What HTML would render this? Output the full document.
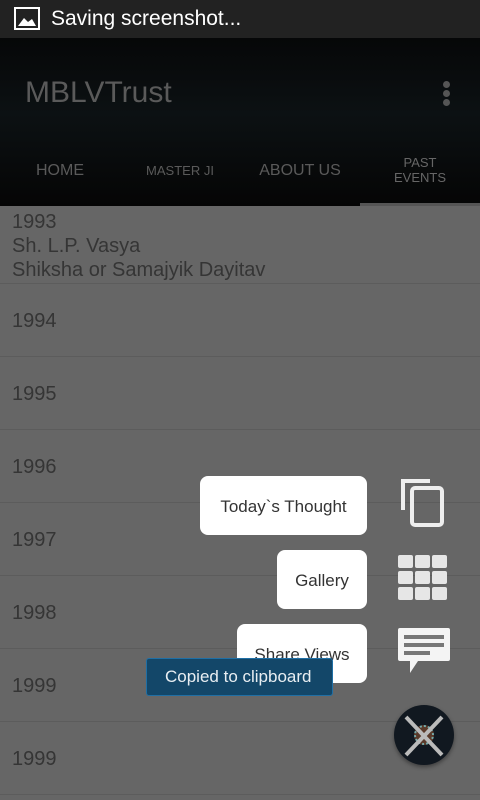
<!DOCTYPE html>
<html><head><meta charset="utf-8"><style>
*{margin:0;padding:0;box-sizing:border-box}
body{width:480px;height:800px;overflow:hidden;background:#666;font-family:"Liberation Sans",sans-serif;position:relative}
.sb{position:absolute;top:0;left:0;width:480px;height:38px;background:#222;color:#fff;font-size:21px}
.ab{position:absolute;top:38px;left:0;width:480px;height:168px;background:linear-gradient(#060708,#0c1113 45%,#050505)}
.t{position:absolute;color:#5a5a5a}
.row{position:absolute;left:0;width:480px;border-bottom:1px solid #5c5c5c;color:#353535;font-size:20px;padding-left:12px}
.pill{position:absolute;background:#fff;border-radius:8px;color:#333;font-size:17px;text-align:center;height:59px;line-height:61px}
</style></head><body>
<div class="sb">
<svg style="position:absolute;left:14px;top:7px" width="26" height="23" viewBox="0 0 26 23"><rect x="1" y="1" width="24" height="21" fill="none" stroke="#fff" stroke-width="2"/><path d="M4 19 L10 11 L14 15 L18 12 L22 19Z" fill="#fff"/></svg>
<span style="position:absolute;left:51px;top:7px">Saving screenshot...</span></div>
<div class="ab">
<div class="t" style="left:25px;top:38px;font-size:30px">MBLVTrust</div>
<div style="position:absolute;left:443px;top:43px;width:7px">
<div style="width:7px;height:7px;border-radius:50%;background:#555;margin-bottom:2px"></div><div style="width:7px;height:7px;border-radius:50%;background:#555;margin-bottom:2px"></div><div style="width:7px;height:7px;border-radius:50%;background:#555"></div></div>
<div class="t" style="left:0;width:120px;text-align:center;top:124px;font-size:16px">HOME</div>
<div class="t" style="left:120px;width:120px;text-align:center;top:125px;font-size:13px">MASTER JI</div>
<div class="t" style="left:240px;width:120px;text-align:center;top:124px;font-size:16px">ABOUT US</div>
<div class="t" style="left:360px;width:120px;text-align:center;top:117px;font-size:13px;line-height:15px;color:#666">PAST<br>EVENTS</div>
<div style="position:absolute;left:360px;top:165px;width:120px;height:3px;background:#555"></div>
</div>
<div class="row" style="top:206px;height:78px;line-height:24px;padding-top:4px">1993<br>Sh. L.P. Vasya<br>Shiksha or Samajyik Dayitav</div>
<div class="row" style="top:284px;height:73px;line-height:75px">1994</div>
<div class="row" style="top:357px;height:73px;line-height:75px">1995</div>
<div class="row" style="top:430px;height:73px;line-height:75px">1996</div>
<div class="row" style="top:503px;height:73px;line-height:75px">1997</div>
<div class="row" style="top:576px;height:73px;line-height:75px">1998</div>
<div class="row" style="top:649px;height:73px;line-height:75px">1999</div>
<div class="row" style="top:722px;height:73px;line-height:75px">1999</div>
<div class="pill" style="left:200px;top:476px;width:167px">Today`s Thought</div>
<div class="pill" style="left:277px;top:550px;width:90px">Gallery</div>
<div class="pill" style="left:237px;top:624px;width:130px">Share Views</div>
<div style="position:absolute;left:146px;top:658px;width:187px;height:38px;background:#134769;border:1px solid #1f6fa5;border-radius:3px;color:#e8eef2;font-size:17px;line-height:36px;padding-left:18px">Copied to clipboard</div>
<svg style="position:absolute;left:400px;top:477px" width="46" height="52" viewBox="0 0 46 52"><path d="M3 33 V4 H30" fill="none" stroke="#eee" stroke-width="4"/><rect x="12" y="11" width="30" height="37" rx="3" fill="none" stroke="#eee" stroke-width="4"/></svg>
<svg style="position:absolute;left:398px;top:555px" width="52" height="46"><g fill="#e6e6e6"><rect x="0" y="0" width="15" height="13" rx="2"/><rect x="17" y="0" width="15" height="13" rx="2"/><rect x="34" y="0" width="15" height="13" rx="2"/><rect x="0" y="16" width="15" height="13" rx="2"/><rect x="17" y="16" width="15" height="13" rx="2"/><rect x="34" y="16" width="15" height="13" rx="2"/><rect x="0" y="32" width="15" height="13" rx="2"/><rect x="17" y="32" width="15" height="13" rx="2"/><rect x="34" y="32" width="15" height="13" rx="2"/></g></svg>
<svg style="position:absolute;left:398px;top:628px" width="53" height="47"><path d="M2 0 H50 Q52 0 52 2 V31 Q52 33 50 33 H20 L12 45 V33 H2 Q0 33 0 31 V2 Q0 0 2 0Z" fill="#f4f4f4"/><rect x="6" y="7" width="40" height="4" fill="#777"/><rect x="6" y="15" width="40" height="4" fill="#777"/><rect x="6" y="23" width="26" height="4" fill="#777"/></svg>
<div style="position:absolute;left:394px;top:705px;width:60px;height:60px;border-radius:50%;background:#111820;box-shadow:0 2px 4px rgba(0,0,0,.4)"></div>
<div style="position:absolute;left:414px;top:725px;width:20px;height:20px;border-radius:50%;background:#5a3a2a;border:2px dotted #7aa"></div>
<svg style="position:absolute;left:394px;top:705px" width="60" height="60"><path d="M12 12 L48 50 M48 12 L12 50" stroke="#bbb" stroke-width="4"/></svg>
</body></html>
